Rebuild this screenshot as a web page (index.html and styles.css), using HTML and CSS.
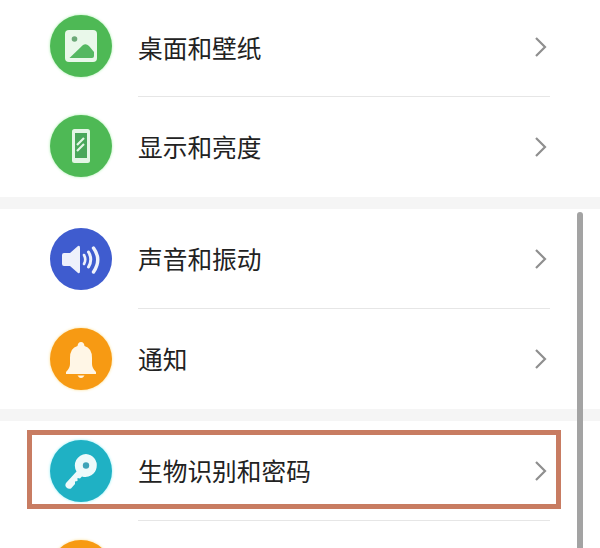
FILE: index.html
```html
<!DOCTYPE html>
<html lang="zh-CN">
<head>
<meta charset="utf-8">
<title>设置</title>
<link rel="stylesheet" href="styles.css">
</head>
<body>
<main class="list">
  <section class="group group-first">
    <div class="row">
      <span class="icon icon-green">
        <svg viewBox="0 0 62 62" width="62" height="62"><rect x="15" y="15" width="32" height="32" rx="4" fill="#e9f8ea"/><circle cx="24.500" cy="24" r="2.800" fill="#6ca878"/><path d="M19.500 43 L33 30 Q36 28 39 31 L44 37 V41 Q44 43 42 43 Z" fill="#55b862"/></svg>
      </span>
      <div class="body"><span class="label">桌面和壁纸</span><svg class="chev" viewBox="0 0 14 22" width="14" height="22"><path d="M2 2 L11 11 L2 20" /></svg></div>
    </div>
    <div class="row row-last">
      <span class="icon icon-green">
        <svg viewBox="0 0 62 62" width="62" height="62"><rect x="22" y="14" width="18" height="34" rx="2.500" fill="#e4f6e5"/><rect x="25" y="18" width="12" height="25" fill="#4aa75a"/><path d="M27 30 L34 23 M27 36 L34 29" stroke="#e4f6e5" stroke-width="2.200" fill="none"/></svg>
      </span>
      <div class="body"><span class="label">显示和亮度</span><svg class="chev" viewBox="0 0 14 22" width="14" height="22"><path d="M2 2 L11 11 L2 20" /></svg></div>
    </div>
  </section>
  <section class="group">
    <div class="row">
      <span class="icon icon-blue">
        <svg viewBox="0 0 62 62" width="62" height="62"><path d="M12 27 Q12 25 14 25 H20 L28 18 Q30 17 30 20 V43 Q30 46 28 45 L20 38 H14 Q12 38 12 36 Z" fill="#eef1fb"/><g fill="none" stroke="#eef1fb" stroke-linecap="round"><path d="M34 27 Q36.500 31.500 34 36" stroke-width="2.600"/><path d="M38.500 24 Q43 31.500 38.500 39" stroke-width="3"/><path d="M43.500 20 Q52 31.500 43.500 44" stroke-width="3.400"/></g></svg>
      </span>
      <div class="body"><span class="label">声音和振动</span><svg class="chev" viewBox="0 0 14 22" width="14" height="22"><path d="M2 2 L11 11 L2 20" /></svg></div>
    </div>
    <div class="row row-last">
      <span class="icon icon-orange">
        <svg viewBox="0 0 62 62" width="62" height="62"><path d="M31 14 Q34 14 34.500 18 Q42 20 42 30 V36 Q42 40 46 44 V46 H16 V44 Q20 40 20 36 V30 Q20 20 27.500 18 Q28 14 31 14 Z" fill="#fff6e6"/><path d="M27.500 47.500 H34.500 Q33 50 31 50 Q29 50 27.500 47.500 Z" fill="#fff6e6"/></svg>
      </span>
      <div class="body"><span class="label">通知</span><svg class="chev" viewBox="0 0 14 22" width="14" height="22"><path d="M2 2 L11 11 L2 20" /></svg></div>
    </div>
  </section>
  <section class="group">
    <div class="row">
      <span class="icon icon-teal">
        <svg viewBox="0 0 62 62" width="62" height="62"><path d="M36 14 A11.500 11.500 0 1 1 32 36.500 L30 38.500 L27.500 38 L27.500 41 L25 41.500 L25 44 L21 48.500 Q18.500 49.500 16.500 47.500 Q14.500 45.500 16 43 L26.500 31.500 A11.500 11.500 0 0 1 36 14 Z" fill="#eefafb"/><circle cx="36" cy="25.500" r="3.200" fill="#3fa3b8"/></svg>
      </span>
      <div class="body"><span class="label">生物识别和密码</span><svg class="chev" viewBox="0 0 14 22" width="14" height="22"><path d="M2 2 L11 11 L2 20" /></svg></div>
    </div>
    <div class="row row-last">
      <span class="icon icon-orange"></span>
      <div class="body"></div>
    </div>
  </section>
</main>
<div class="highlight"></div>
<div class="scrollbar"></div>
</body>
</html>
```
FILE: styles.css
```css
html, body {
  margin: 0;
  height: 548px;
  overflow: hidden;
  background: #fff;
}
body {
  position: relative;
  font-family: "Noto Sans CJK SC", "Liberation Sans", sans-serif;
}
.list {
  display: flex;
  flex-direction: column;
  gap: 12px;
  background: #f5f5f5;
}
.group {
  background: #fff;
  display: flex;
  flex-direction: column;
}
.group-first {
  margin-top: -3px;
}
.row {
  display: flex;
  align-items: center;
  height: 100px;
  padding-left: 50px;
  gap: 26px;
}
.row-last .body {
  border-bottom: 0;
}
.icon {
  flex: none;
  width: 62px;
  height: 62px;
  margin-bottom: 1px;
  border-radius: 50%;
  display: block;
}
.group-first .icon {
  margin-bottom: 2px;
}
.icon svg {
  display: block;
}
.icon-green {
  background: #4eb955;
  box-shadow: 0 0 3px #a6eeaa;
}
.icon-blue {
  background: #3f5ccf;
}
.icon-orange {
  background: #f79a13;
  box-shadow: 0 0 3px #fbdc8a;
}
.icon-teal {
  background: #1fb1c4;
  box-shadow: 0 0 3px #8eeff7;
}
.body {
  flex: 1;
  align-self: stretch;
  margin-right: 50px;
  display: flex;
  align-items: center;
  justify-content: space-between;
  border-bottom: 1px solid #e6e6e6;
  box-sizing: border-box;
}
.label {
  font-size: 24.700px;
  line-height: 34px;
  color: #222;
  margin-bottom: 2px;
}
.group-first .row:first-child .label {
  margin-bottom: 0;
}
.chev {
  margin-right: 2px;
}
.chev path {
  fill: none;
  stroke: #8f8f8f;
  stroke-width: 2.200;
}
.highlight {
  position: absolute;
  left: 27px;
  top: 430px;
  width: 524px;
  height: 69px;
  border: 5px solid #c87c62;
}
.scrollbar {
  position: absolute;
  left: 577px;
  top: 212px;
  width: 6px;
  height: 340px;
  border-radius: 3px 3px 0 0;
  background: #a3a3a3;
}
```
